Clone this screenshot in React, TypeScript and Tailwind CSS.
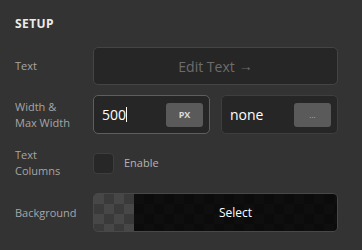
export default function App() {
  return (
    <div
      className="w-[362px] h-[250px] bg-[#333333] pl-[15px] pr-[24px] pt-[15px]"
      style={{ fontFamily: '"Open Sans", "Noto Sans", sans-serif' }}
    >
      <div className="h-[18px] text-[12px] leading-[18px] font-bold tracking-[0.4px] text-[#ececec]">SETUP</div>

      <div className="mt-[14px] flex h-[38px] items-center">
        <div className="w-[78px] text-[11px] leading-[16px] text-[#a6a6a6]">Text</div>
        <button className="flex h-full flex-1 items-center justify-center rounded-[5px] border border-[#444444] bg-[#262626] text-[14px] text-[#6c6c6c]">
          Edit Text
          <span className="ml-[4px] font-['Liberation_Sans',sans-serif] text-[14px]">→</span>
        </button>
      </div>

      <div className="mt-[10px] flex h-[39px] items-center">
        <div className="w-[78px] text-[11px] leading-[16px] text-[#a6a6a6]">
          Width &amp;
          <br />
          Max Width
        </div>
        <div className="grid h-full flex-1 grid-cols-2 gap-[11px]">
          <div className="flex items-center rounded-[5px] border border-[#5e5e5e] bg-[#262626] pl-[8px] pr-[6px]">
            <span className="text-[14px] text-white">500</span>
            <span className="h-[15px] w-px bg-white" />
            <span className="ml-auto flex h-[24px] w-[37px] items-center justify-center rounded-[3px] bg-[#5a5a5a] text-[9px] font-bold text-[#dcdcdc]">
              PX
            </span>
          </div>
          <div className="flex items-center rounded-[5px] border border-[#3e3e3e] bg-[#262626] pl-[8px] pr-[6px]">
            <span className="text-[14px] text-white">none</span>
            <span className="ml-auto flex h-[24px] w-[37px] items-center justify-center rounded-[3px] bg-[#5a5a5a] text-[8px] leading-none text-[#b5b5b5]">
              ...
            </span>
          </div>
        </div>
      </div>

      <div className="mt-[13px] flex h-[32px] items-center">
        <div className="w-[78px] text-[11px] leading-[16px] text-[#a6a6a6]">
          Text
          <br />
          Columns
        </div>
        <div className="h-[21px] w-[21px] rounded-[4px] border border-[#3e3e3e] bg-[#272727]" />
        <span className="ml-[10px] text-[11px] text-[#b4b4b4]">Enable</span>
      </div>

      <div className="mt-[14px] flex h-[39px] items-center">
        <div className="w-[78px] text-[11px] leading-[16px] text-[#a6a6a6]">Background</div>
        <button className="flex h-full flex-1 overflow-hidden rounded-[5px] border border-[#484848] bg-[repeating-conic-gradient(#3a3a3a_0_25%,#474747_0_50%)] bg-[length:20px_20px]">
          <span className="w-[40px] shrink-0" />
          <span className="flex h-full flex-1 items-center justify-center bg-[rgba(0,0,0,0.8)] text-[12px] text-white">
            Select
          </span>
        </button>
      </div>
    </div>
  );
}
